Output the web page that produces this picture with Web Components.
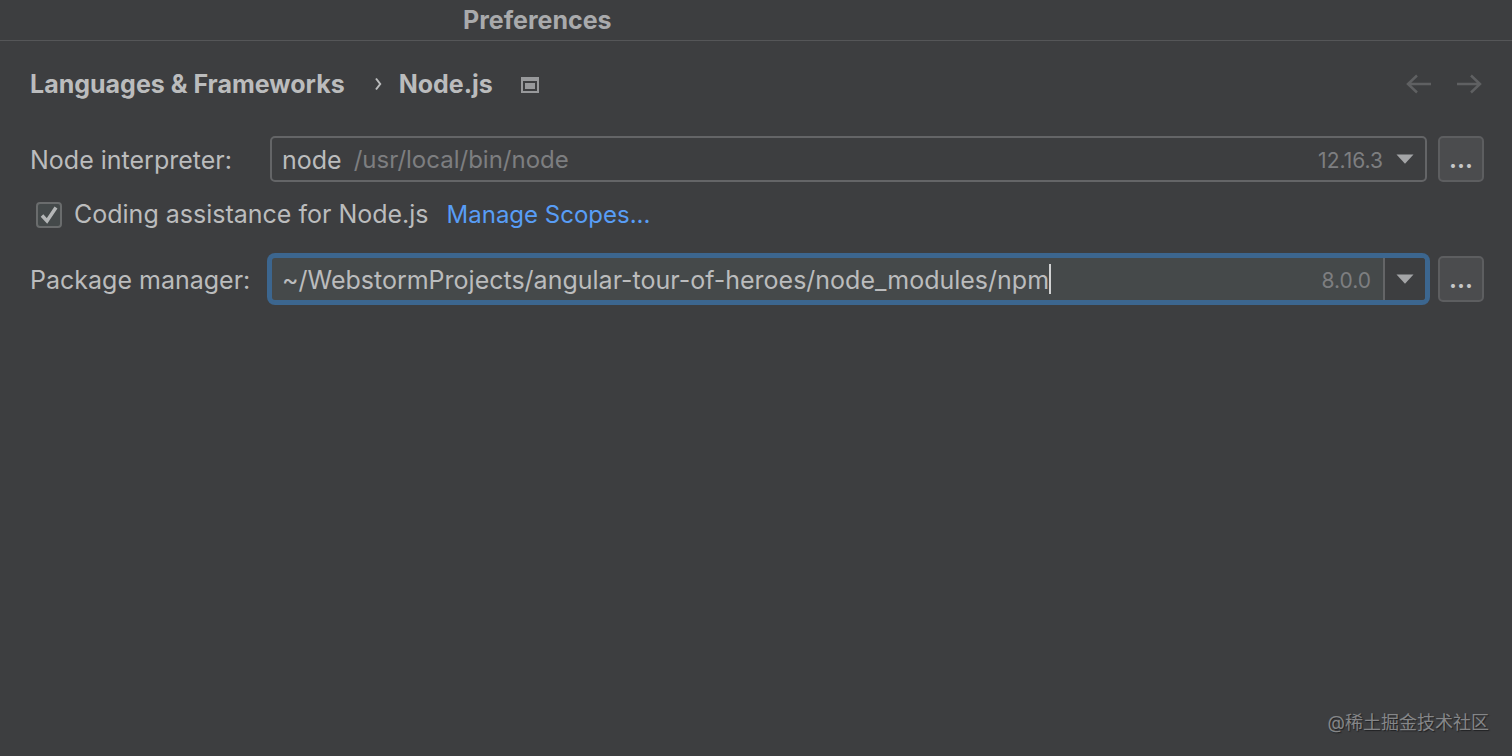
<!DOCTYPE html>
<html lang="en">
<head>
<meta charset="utf-8">
<title>Preferences</title>
<style>
html, body { height: 100%; }
body {
  margin: 0;
  background: #3d3e40;
  color: #bbbcbd;
  font: 25px/30px Inter, "Noto Sans CJK SC", sans-serif;
  --muted: #7d7e80;
  --line: #646567;
  --label-width: 240px;
}
</style>
</head>
<body>
<prefs-window>
  <prefs-titlebar slot="title">Preferences</prefs-titlebar>
  <prefs-breadcrumb slot="crumbs" section="Languages &amp; Frameworks" page="Node.js"></prefs-breadcrumb>
  <interpreter-field label="Node interpreter:" name="node" path="/usr/local/bin/node" version="12.16.3"></interpreter-field>
  <assist-option label="Coding assistance for Node.js" link="Manage Scopes..."></assist-option>
  <package-field label="Package manager:" path="~/WebstormProjects/angular-tour-of-heroes/node_modules/npm" version="8.0.0"></package-field>
  <span slot="mark">@稀土掘金技术社区</span>
</prefs-window>
<script>
class Base extends HTMLElement {
  connectedCallback() {
    if (!this.shadowRoot) this.attachShadow({ mode: 'open' }).innerHTML = this.render();
  }
  attr(name) {
    return (this.getAttribute(name) || '').replace(/&/g, '&amp;').replace(/</g, '&lt;').replace(/"/g, '&quot;');
  }
}

const arrow = '<svg width="18" height="10" viewBox="0 0 18 10" aria-hidden="true"><path d="M0.5 0.5h17L9 9.7z" fill="#a4a5a7"/></svg>';

const fieldStyle = `
  :host { display: flex; align-items: center; }
  label { flex: none; width: var(--label-width); padding-top: 1px; }
  .box { flex: 1; min-width: 0; height: 46px; box-sizing: border-box; display: flex; align-items: center;
    border: 2px solid var(--line); border-radius: 5px; margin-right: 11px; padding-left: 10px; }
  .version { margin-left: auto; padding-top: 3px; font-size: 21px; color: var(--muted); }
  svg { display: block; }`;

customElements.define('prefs-window', class extends Base {
  render() {
    return `<style>
      :host { display: flex; flex-direction: column; min-height: 100%; }
      .head { padding: 28px 30px 0; }
      main { display: flex; flex-direction: column; padding: 37px 28px 0 30px; }
      footer { margin-top: auto; padding: 0 23px 20px; text-align: right; font-size: 18px; line-height: 26px;
        color: #858688; text-shadow: 1px 1px 1px #202123; }
    </style>
    <slot name="title"></slot>
    <div class="head"><slot name="crumbs"></slot></div>
    <main><slot></slot></main>
    <footer><slot name="mark"></slot></footer>`;
  }
});

customElements.define('prefs-titlebar', class extends Base {
  render() {
    return `<style>
      :host { display: block; border-bottom: 1px solid #555658; }
      h1 { margin: 0; padding-left: 463px; font-size: 25px; line-height: 40px; font-weight: 700; color: #a9aaac; }
    </style><h1><slot></slot></h1>`;
  }
});

customElements.define('prefs-breadcrumb', class extends Base {
  render() {
    return `<style>
      :host { display: flex; align-items: center; font-weight: 700; }
      a { color: inherit; text-decoration: none; }
      svg { display: block; }
      .sep { margin: 0 17px 0 30px; }
      .scope { margin: 2px 0 0 28px; }
      nav { display: flex; align-items: center; }
      .history { display: flex; gap: 24px; margin-left: auto; }
      button { border: 0; padding: 0; background: none; color: #5f6062; }
    </style>
    <nav aria-label="Location"><a href="#frameworks">${this.attr('section')}</a>
      <svg class="sep" width="7" height="14" viewBox="0 0 7 14" aria-hidden="true"><path d="M1 1.5L5.2 7L1 12.5" fill="none" stroke="#bbbcbd" stroke-width="2"/></svg>
      <a href="#node">${this.attr('page')}</a></nav>
    <svg class="scope" width="18" height="16" viewBox="0 0 18 16" aria-hidden="true"><path d="M0 0h18v16H0zM2 4v10h14V4z" fill="#98999b" fill-rule="evenodd"/><path d="M4 6h10v6H4z" fill="#98999b"/></svg>
    <div class="history">
      <button aria-label="Back"><svg width="26" height="20" viewBox="0 0 26 20"><path d="M25 10H2M11 1.5L2 10l9 8.5" fill="none" stroke="currentColor" stroke-width="2.5"/></svg></button>
      <button aria-label="Forward"><svg width="26" height="20" viewBox="0 0 26 20"><path d="M1 10h23M15 1.5L24 10l-9 8.5" fill="none" stroke="currentColor" stroke-width="2.5"/></svg></button>
    </div>`;
  }
});

customElements.define('browse-button', class extends Base {
  render() {
    return `<style>
      :host { display: block; flex: none; }
      button { display: block; width: 46px; height: 46px; border: 2px solid #5d5e60; border-radius: 5px; padding: 0;
        background: #4b4c4e; color: #c6c7c8; font: inherit; font-weight: 600; line-height: 38px; }
    </style><button aria-label="Browse">...</button>`;
  }
});

customElements.define('interpreter-field', class extends Base {
  render() {
    return `<style>${fieldStyle}
      select { appearance: none; field-sizing: content; border: 0; padding: 1px 0 0; margin: 0 12px 0 0; background: none;
        color: inherit; font: inherit; outline: 0; }
      .path { color: var(--muted); font-size: 24px; padding-top: 1px; }
      svg { margin: 0 11px 0 13px; }
    </style>
    <label for="interp">${this.attr('label')}</label>
    <div class="box"><select id="interp"><option>${this.attr('name')}</option></select>
      <span class="path">${this.attr('path')}</span><span class="version">${this.attr('version')}</span>${arrow}</div>
    <browse-button></browse-button>`;
  }
});

customElements.define('assist-option', class extends Base {
  render() {
    return `<style>
      :host { display: flex; align-items: baseline; margin: 17px 0 26px 6px; }
      input { appearance: none; width: 26px; height: 26px; box-sizing: border-box; margin: 0 12px 0 0;
        border: 2px solid #6a6c6d; border-radius: 4px; background: #44494a; }
      .tick { display: grid; grid-template: 26px / 38px; align-items: center; align-self: center; }
      .tick > * { grid-area: 1 / 1; }
      svg { margin-left: 4px; pointer-events: none; }
      a { margin-left: 18px; color: #589df6; font-size: 24px; text-decoration: none; }
    </style>
    <span class="tick"><input id="assist" type="checkbox" checked>
      <svg width="18" height="18" viewBox="0 0 18 18" aria-hidden="true"><path d="M2 9.5L7 15L16 1.500" fill="none" stroke="#b4b6b7" stroke-width="3.500"/></svg></span>
    <label for="assist">${this.attr('label')}</label><a href="#scopes">${this.attr('link')}</a>`;
  }
});

customElements.define('package-field', class extends Base {
  render() {
    return `<style>${fieldStyle}
      .box { border-color: #3c668f; background: #45494a; box-shadow: 0 0 0 3px #3c668f; }
      input { field-sizing: content; border: 0; padding: 1px 0 0; margin: 0; background: none; color: inherit; font: inherit;
        outline: 0; min-width: 0; caret-color: transparent; }
      .caret { flex: none; width: 2px; height: 30px; background: #d0d1d2; }
      button { align-self: stretch; display: grid; place-items: center; width: 42px; margin-left: 12px; padding: 0;
        border: 0; border-left: 2px solid var(--line); border-radius: 0 3px 3px 0; background: #3d3e40; }
    </style>
    <label for="pkg">${this.attr('label')}</label>
    <div class="box"><input id="pkg" type="text" spellcheck="false" value="${this.attr('path')}"><span class="caret"></span>
      <span class="version">${this.attr('version')}</span><button aria-label="Show versions">${arrow}</button></div>
    <browse-button></browse-button>`;
  }
});
</script>
</body>
</html>
